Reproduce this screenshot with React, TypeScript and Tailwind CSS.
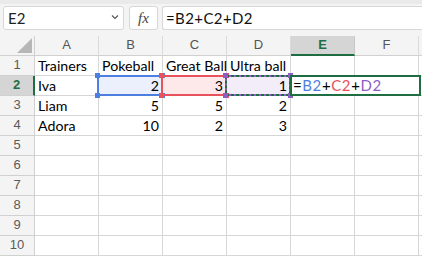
import React from 'react'

const GREEN = '#1f6e43'
const cols = ['A', 'B', 'C', 'D', 'E', 'F']

type Cell = { v: string; num?: boolean }

const data: Record<number, (Cell | null)[]> = {
    1: [{ v: 'Trainers' }, { v: 'Pokeball' }, { v: 'Great Ball' }, { v: 'Ultra ball' }, null, null],
    2: [{ v: 'Iva' }, { v: '2', num: true }, { v: '3', num: true }, { v: '1', num: true }, null, null],
    3: [{ v: 'Liam' }, { v: '5', num: true }, { v: '5', num: true }, { v: '2', num: true }, null, null],
    4: [{ v: 'Adora' }, { v: '10', num: true }, { v: '2', num: true }, { v: '3', num: true }, null, null],
}

function Handles({ color }: { color: string }) {
    const sq = 'absolute w-[5px] h-[5px]'
    return (
        <>
            <span className={`${sq} -left-[2px] -top-[2px]`} style={{ background: color }} />
            <span className={`${sq} -right-[2px] -top-[2px]`} style={{ background: color }} />
            <span className={`${sq} -left-[2px] -bottom-[2px]`} style={{ background: color }} />
            <span className={`${sq} -right-[2px] -bottom-[2px]`} style={{ background: color }} />
        </>
    )
}

function RangeBox({ kind }: { kind: 'B' | 'C' | 'D' }) {
    if (kind === 'B') {
        return (
            <div className="absolute -top-[1px] -left-[2px] -right-[1px] -bottom-[1px] z-10 shadow-[inset_0_0_0_2px_#4d7fe0]">
                <Handles color="#4d7fe0" />
            </div>
        )
    }
    if (kind === 'C') {
        return (
            <div className="absolute -top-[1px] -left-[2px] -right-[1px] -bottom-[1px] z-10 shadow-[inset_0_0_0_2px_#e7525c]">
                <Handles color="#e7525c" />
            </div>
        )
    }
    return (
        <div className="absolute -top-[1px] -left-[2px] -right-[1px] -bottom-[1px] z-10">
            <svg className="absolute inset-0 w-full h-full" viewBox="0 0 66 22" preserveAspectRatio="none">
                <rect x="1" y="1" width="64" height="20" fill="none" stroke="#8d5cc6" strokeWidth="2" />
                <rect x="1" y="1" width="64" height="20" fill="none" stroke={GREEN} strokeWidth="2" strokeDasharray="3 2" />
            </svg>
            <Handles color="#8d5cc6" />
        </div>
    )
}

export default function App() {
    return (
        <div className="w-[422px] h-[257px] overflow-hidden bg-white font-['Lato',sans-serif] text-black">
            {/* formula bar */}
            <div className="h-[36px] bg-[#f4f4f4] border-t-[4px] border-[#eaeaea] flex items-start pt-[2px]">
                <div className="ml-[3px] w-[121px] h-[24px] bg-white border border-[#d7d7d7] rounded-[3px] flex items-center justify-between pl-[4px] pr-[4px]">
                    <span className="text-[15px] leading-none text-[#222]">E2</span>
                    <svg width="8" height="6" viewBox="0 0 8 6" className="mt-[-3px]">
                        <polyline points="1,1.5 4,4.5 7,1.5" fill="none" stroke="#555" strokeWidth="1.2" />
                    </svg>
                </div>
                <div className="ml-[5px] w-[29px] h-[24px] bg-white border border-[#d7d7d7] rounded-[3px] flex items-center justify-center">
                    <span className="font-['Liberation_Serif',serif] italic text-[15px] leading-none text-[#444]">fx</span>
                </div>
                <div className="ml-[4px] flex-1 h-[24px] bg-white border border-r-0 border-[#d7d7d7] rounded-l-[3px] flex items-center pl-[3px]">
                    <span className="text-[15px] leading-none tracking-[0.4px] text-[#111]">=B2+C2+D2</span>
                </div>
            </div>

            {/* sheet */}
            <div className="grid grid-cols-[35px_64px_64px_64px_64px_64px_64px_3px] grid-rows-[20px] auto-rows-[20px]">
                {/* header row */}
                <div className="bg-[#f4f4f4] border-r border-b border-[#d0d0d0] relative">
                    <svg width="15" height="15" viewBox="0 0 15 15" className="absolute right-[2px] bottom-[2px]">
                        <polygon points="0,15 15,0 15,15" fill="#b7b7b7" />
                    </svg>
                </div>
                {cols.map(c =>
                    c === 'E' ? (
                        <div
                            key={c}
                            className="bg-[#d5d5d5] border-r border-b-[2px] border-r-[#c8c8c8] border-b-[#1f6e43] flex items-center justify-center pb-[1px] font-['Liberation_Sans',sans-serif] font-bold text-[13px] text-[#1f6e43]"
                        >
                            {c}
                        </div>
                    ) : (
                        <div
                            key={c}
                            className="bg-[#f4f4f4] border-r border-b border-r-[#dadada] border-b-[#d0d0d0] flex items-center justify-center pb-[1px] font-['Liberation_Sans',sans-serif] text-[13px] text-[#555]"
                        >
                            {c}
                        </div>
                    )
                )}
                <div className="bg-[#f4f4f4] border-b border-[#d0d0d0]" />

                {Array.from({ length: 10 }, (_, i) => i + 1).map(r => {
                    const row = data[r] || [null, null, null, null, null, null]
                    const active = r === 2
                    return (
                        <React.Fragment key={r}>
                            {active ? (
                                <div className="bg-[#d5d5d5] border-r-[2px] border-b border-r-[#1f6e43] border-b-[#d0d0d0] flex items-end justify-center pb-[2px] font-['Liberation_Sans',sans-serif] font-bold text-[13px] leading-[16px] text-[#1f6e43]">
                                    {r}
                                </div>
                            ) : (
                                <div className="bg-[#f4f4f4] border-r border-b border-[#d0d0d0] flex items-end justify-center pb-[2px] font-['Liberation_Sans',sans-serif] text-[13px] leading-[16px] text-[#5a5a5a]">
                                    {r}
                                </div>
                            )}
                            {row.map((cell, ci) => {
                                let bg = ''
                                if (active && ci === 1) bg = 'bg-[#ebf0fc]'
                                if (active && ci === 2) bg = 'bg-[#fde9ea]'
                                if (active && ci === 3) bg = 'bg-[#f2edf9]'
                                return (
                                    <div
                                        key={ci}
                                        className={`relative border-r border-b border-[#d6d6d6] flex items-end ${cell?.num ? 'justify-end pr-[3px]' : 'pl-[3px]'} ${bg}`}
                                    >
                                        {cell && (
                                            <span className="relative z-20 text-[14.2px] leading-[18px] whitespace-nowrap">{cell.v}</span>
                                        )}
                                        {active && ci === 1 && <RangeBox kind="B" />}
                                        {active && ci === 2 && <RangeBox kind="C" />}
                                        {active && ci === 3 && <RangeBox kind="D" />}
                                        {active && ci === 4 && (
                                            <div className="absolute -top-[1px] -left-[1px] w-[131px] -bottom-[1px] z-30 bg-white border-2 border-[#1f6e43] flex items-end pl-[1px]">
                                                <span className="text-[15px] leading-[18px] tracking-[0.6px] whitespace-nowrap">
                                                    =<span className="text-[#4d7fe0]">B2</span>+
                                                    <span className="text-[#e7525c]">C2</span>+
                                                    <span className="text-[#8d5cc6]">D2</span>
                                                </span>
                                            </div>
                                        )}
                                    </div>
                                )
                            })}
                            <div className="border-b border-[#d6d6d6]" />
                        </React.Fragment>
                    )
                })}
            </div>
        </div>
    )
}
